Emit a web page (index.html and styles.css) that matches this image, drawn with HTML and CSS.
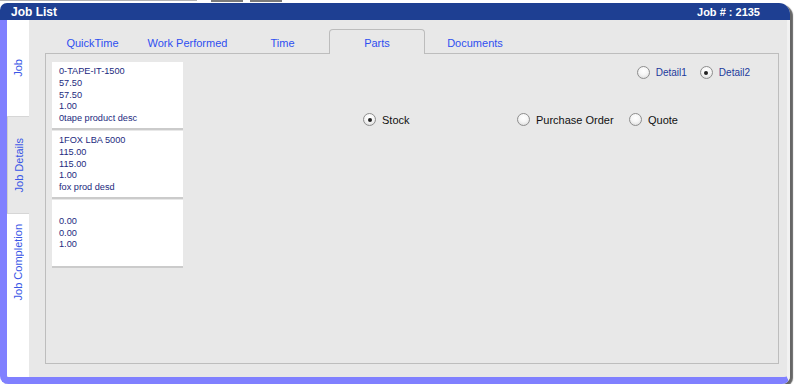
FILE: index.html
```html
<!doctype html>
<html>
  <head>
    <meta charset="utf-8">
    <title>Job List</title>
    <link rel="stylesheet" href="styles.css">
  </head>
  <body>
    <div class="topstrip">
      <span class="seg seg-a"></span>
      <span class="seg seg-b"></span>
      <span class="seg seg-c"></span>
    </div>

    <div class="window">
      <header class="titlebar">
        <h1>Job List</h1>
        <span class="jobno">Job # : 2135</span>
      </header>

      <div class="frame">
        <nav class="sidetabs">
          <div class="vtab"><span>Job</span></div>
          <div class="vtab active"><span>Job Details</span></div>
          <div class="vtab"><span>Job Completion</span></div>
        </nav>

        <main class="main">
          <ul class="tabs">
            <li class="tab">QuickTime</li>
            <li class="tab">Work Performed</li>
            <li class="tab">Time</li>
            <li class="tab active">Parts</li>
            <li class="tab docs">Documents</li>
          </ul>

          <section class="panel">
            <div class="cards">
              <div class="card">
                <div>0-TAPE-IT-1500</div>
                <div>57.50</div>
                <div>57.50</div>
                <div>1.00</div>
                <div>0tape product desc</div>
              </div>
              <div class="card">
                <div>1FOX LBA 5000</div>
                <div>115.00</div>
                <div>115.00</div>
                <div>1.00</div>
                <div>fox prod desd</div>
              </div>
              <div class="card">
                <div>&nbsp;</div>
                <div>0.00</div>
                <div>0.00</div>
                <div>1.00</div>
              </div>
            </div>

            <div class="options">
              <div class="detail-row">
                <label class="opt detail"><span class="radio"></span>Detail1</label>
                <label class="opt detail"><span class="radio checked"></span>Detail2</label>
              </div>
              <div class="source-row">
                <label class="opt source stock"><span class="radio checked"></span>Stock</label>
                <label class="opt source po"><span class="radio"></span>Purchase Order</label>
                <label class="opt source"><span class="radio"></span>Quote</label>
              </div>
            </div>
          </section>
        </main>
      </div>
    </div>
  </body>
</html>
```

FILE: styles.css
```css
* {
  box-sizing: border-box;
}

html, body {
  background: #fff;
  font-family: "Liberation Sans", Arial, sans-serif;
  margin: 0;
}

.topstrip {
  display: flex;
  align-items: flex-start;
  height: 3px;
}

.seg {
  display: block;
}
.seg-a {
  width: 197px;
  height: 1px;
  background: #b4b4b4;
}
.seg-b {
  width: 32px;
  height: 2px;
  margin-left: 14px;
  background: #7a7a7a;
}
.seg-c {
  width: 32px;
  height: 2px;
  margin-left: 7px;
  background: #7a7a7a;
}

.window {
  display: flex;
  flex-direction: column;
  width: 790px;
  height: 381px;
  border-radius: 7px 11px 8px 8px;
  box-shadow: 3px 2px 1px rgba(0, 0, 0, 0.6);
}

.titlebar {
  display: flex;
  align-items: center;
  justify-content: space-between;
  height: 17px;
  padding: 0 30px 0 11px;
  background: #1e3f92;
  border-radius: 7px 11px 0 0;
  color: #fff;
}

.titlebar h1 {
  margin: 0;
  font-size: 12px;
  font-weight: bold;
}

.jobno {
  font-size: 11px;
  font-weight: bold;
}

.frame {
  display: flex;
  flex: 1 1 auto;
  background: #e8e8e8;
  border-left: 7px solid #8080ff;
  border-bottom: 7px solid #8080ff;
  border-right: 3px solid #f2f2f2;
  border-radius: 0 0 8px 8px;
}

/* vertical tabs on the left */
.sidetabs {
  display: flex;
  flex-direction: column;
  width: 22px;
  background: #fff;
  border-bottom-left-radius: 2px;
}

.vtab {
  display: flex;
  align-items: center;
  justify-content: center;
  height: 97px;
  border-bottom: 1px solid #d6d6d6;
}
.vtab:last-child {
  border-bottom: none;
}

.vtab span {
  writing-mode: vertical-rl;
  transform: rotate(180deg);
  font-size: 11px;
  color: #3856e6;
}

.vtab.active {
  background: #e8e8e8;
  border-left: 1px solid #d0d0d0;
}

.main {
  display: flex;
  flex: 1 1 auto;
  flex-direction: column;
  padding: 9px 8px 13px 16px;
}

.tabs {
  display: flex;
  height: 24px;
  margin: 0;
  padding: 0;
  list-style: none;
}

.tab {
  width: 95px;
  padding-top: 6px;
  font-size: 11px;
  line-height: 16px;
  text-align: center;
  color: #2f4ff0;
}

.tab.active {
  position: relative;
  z-index: 1;
  height: 25px;
  margin-left: -1px;
  width: 96px;
  background: #e8e8e8;
  border: 1px solid #bcbcbc;
  border-bottom: none;
  border-radius: 4px 4px 0 0;
  padding-top: 5px;
}

.tab.docs {
  padding-left: 5px;
}

.panel {
  display: flex;
  flex: 1 1 auto;
  padding: 8px 6px;
  border: 1px solid #bdbdbd;
}

.cards {
  display: flex;
  flex-direction: column;
  gap: 1px;
  width: 131px;
}

.card {
  height: 68px;
  padding: 4px 7px;
  background: #fff;
  border-bottom: 2px solid #cbcbcb;
  font-size: 9.2px;
  line-height: 11.8px;
  color: #1c2a7e;
}

.options {
  display: flex;
  flex: 1 1 auto;
  flex-direction: column;
}

.detail-row {
  display: flex;
  justify-content: flex-end;
  gap: 13px;
  margin-top: 4px;
  padding-right: 22px;
}

.source-row {
  display: flex;
  margin-top: 34px;
  margin-left: 180px;
}

.opt {
  display: flex;
  align-items: center;
  gap: 6px;
  height: 13px;
}

.detail {
  font-size: 10px;
  color: #1c3a9c;
}

.source {
  font-size: 11px;
  color: #111;
}
.stock {
  width: 154px;
}
.po {
  width: 112px;
}

.radio {
  display: flex;
  align-items: center;
  justify-content: center;
  width: 13px;
  height: 13px;
  border: 1px solid #8e8e8e;
  border-radius: 50%;
  background: radial-gradient(circle at 50% 35%, #fff 0, #f6f6f6 45%, #d4d4d4 100%);
}

.radio.checked::after {
  content: "";
  width: 4px;
  height: 4px;
  border-radius: 50%;
  background: #222;
}
```
